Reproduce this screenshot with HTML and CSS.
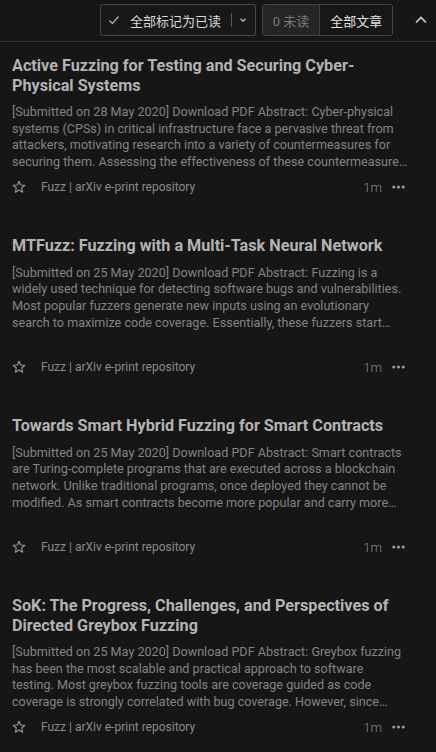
FILE: index.html
```html
<!DOCTYPE html>
<html lang="zh-CN">
<head>
    <meta charset="UTF-8">
    <meta name="viewport" content="width=device-width, initial-scale=1.0">
    <title>Fuzz</title>
    <link rel="stylesheet" href="styles.css">
</head>
<body>
    <header class="toolbar">
        <div class="mark-group">
            <button class="mark-all">
                <svg width="12" height="12" viewBox="0 0 12 12"><path d="M1.5 6.5 L4.5 9.5 L10.5 2.5" fill="none" stroke="#a8a8a8" stroke-width="1.3"/></svg>
                <span>全部标记为已读</span>
            </button>
            <span class="divider"></span>
            <button class="mark-menu">
                <svg width="8" height="8" viewBox="0 0 8 8"><path d="M1.5 2.8 L4 5.2 L6.5 2.8" fill="none" stroke="#b0b0b0" stroke-width="1.4"/></svg>
            </button>
        </div>
        <div class="filter-group">
            <button class="filter unread">0 未读</button>
            <button class="filter all">全部文章</button>
        </div>
        <button class="collapse">
            <svg width="14" height="10" viewBox="0 0 14 10"><path d="M2 7.5 L7 2.5 L12 7.5" fill="none" stroke="#d0d0d0" stroke-width="1.6"/></svg>
        </button>
    </header>

    <main class="article-list">
        <article class="card">
            <div class="card-body">
                <h3 class="card-title">Active Fuzzing for Testing and Securing Cyber-Physical Systems</h3>
                <p class="card-desc">[Submitted on 28 May 2020] Download PDF Abstract: Cyber-physical systems (CPSs) in critical infrastructure face a pervasive threat from attackers, motivating research into a variety of countermeasures for securing them. Assessing the effectiveness of these countermeasures is challenging, however, as realistic benchmarks of attacks are difficult to manually construct.</p>
            </div>
            <div class="card-foot">
                <svg class="star" width="14" height="14" viewBox="0 0 14 14"><path d="M7 1.2 L8.7 5 L12.8 5.3 L9.7 8 L10.6 12.2 L7 10 L3.4 12.2 L4.3 8 L1.2 5.3 L5.3 5 Z" fill="none" stroke="#9a9a9a" stroke-width="1.1" stroke-linejoin="round"/></svg>
                <span class="source">Fuzz | arXiv e-print repository</span>
                <span class="time">1m</span>
                <svg class="more" width="13" height="4" viewBox="0 0 13 4"><circle cx="1.8" cy="2" r="1.6"/><circle cx="6.5" cy="2" r="1.6"/><circle cx="11.2" cy="2" r="1.6"/></svg>
            </div>
        </article>

        <article class="card">
            <div class="card-body">
                <h3 class="card-title">MTFuzz: Fuzzing with a Multi-Task Neural Network</h3>
                <p class="card-desc">[Submitted on 25 May 2020] Download PDF Abstract: Fuzzing is a widely used technique for detecting software bugs and vulnerabilities. Most popular fuzzers generate new inputs using an evolutionary search to maximize code coverage. Essentially, these fuzzers start with a set of seed inputs.</p>
            </div>
            <div class="card-foot">
                <svg class="star" width="14" height="14" viewBox="0 0 14 14"><path d="M7 1.2 L8.7 5 L12.8 5.3 L9.7 8 L10.6 12.2 L7 10 L3.4 12.2 L4.3 8 L1.2 5.3 L5.3 5 Z" fill="none" stroke="#9a9a9a" stroke-width="1.1" stroke-linejoin="round"/></svg>
                <span class="source">Fuzz | arXiv e-print repository</span>
                <span class="time">1m</span>
                <svg class="more" width="13" height="4" viewBox="0 0 13 4"><circle cx="1.8" cy="2" r="1.6"/><circle cx="6.5" cy="2" r="1.6"/><circle cx="11.2" cy="2" r="1.6"/></svg>
            </div>
        </article>

        <article class="card">
            <div class="card-body">
                <h3 class="card-title">Towards Smart Hybrid Fuzzing for Smart Contracts</h3>
                <p class="card-desc">[Submitted on 25 May 2020] Download PDF Abstract: Smart contracts are Turing-complete programs that are executed across a blockchain network. Unlike traditional programs, once deployed they cannot be modified. As smart contracts become more popular and carry more value, they become a target for attackers.</p>
            </div>
            <div class="card-foot">
                <svg class="star" width="14" height="14" viewBox="0 0 14 14"><path d="M7 1.2 L8.7 5 L12.8 5.3 L9.7 8 L10.6 12.2 L7 10 L3.4 12.2 L4.3 8 L1.2 5.3 L5.3 5 Z" fill="none" stroke="#9a9a9a" stroke-width="1.1" stroke-linejoin="round"/></svg>
                <span class="source">Fuzz | arXiv e-print repository</span>
                <span class="time">1m</span>
                <svg class="more" width="13" height="4" viewBox="0 0 13 4"><circle cx="1.8" cy="2" r="1.6"/><circle cx="6.5" cy="2" r="1.6"/><circle cx="11.2" cy="2" r="1.6"/></svg>
            </div>
        </article>

        <article class="card">
            <div class="card-body">
                <h3 class="card-title">SoK: The Progress, Challenges, and Perspectives of Directed Greybox Fuzzing</h3>
                <p class="card-desc">[Submitted on 25 May 2020] Download PDF Abstract: Greybox fuzzing has been the most scalable and practical approach to software testing. Most greybox fuzzing tools are coverage guided as code coverage is strongly correlated with bug coverage. However, since most covered codes may not contain bugs.</p>
            </div>
            <div class="card-foot">
                <svg class="star" width="14" height="14" viewBox="0 0 14 14"><path d="M7 1.2 L8.7 5 L12.8 5.3 L9.7 8 L10.6 12.2 L7 10 L3.4 12.2 L4.3 8 L1.2 5.3 L5.3 5 Z" fill="none" stroke="#9a9a9a" stroke-width="1.1" stroke-linejoin="round"/></svg>
                <span class="source">Fuzz | arXiv e-print repository</span>
                <span class="time">1m</span>
                <svg class="more" width="13" height="4" viewBox="0 0 13 4"><circle cx="1.8" cy="2" r="1.6"/><circle cx="6.5" cy="2" r="1.6"/><circle cx="11.2" cy="2" r="1.6"/></svg>
            </div>
        </article>
    </main>
</body>
</html>
```

FILE: styles.css
```css
body {
    margin: 0;
    background-color: #161616;
    font-family: Roboto, "Noto Sans CJK SC", sans-serif;
    color: #b8b8b8;
    overflow: hidden;
}

button {
    font-family: inherit;
    background: none;
    border: none;
    padding: 0;
    color: inherit;
    cursor: pointer;
}

/* top bar */
.toolbar {
    height: 42px;
    box-sizing: border-box;
    border-bottom: 1px solid #2e2e2e;
    display: flex;
    align-items: flex-start;
    padding: 4px 0 0 100px;
}

.mark-group {
    display: flex;
    align-items: center;
    width: 156px;
    height: 32px;
    box-sizing: border-box;
    border: 1px solid #4a4a4a;
    border-radius: 3px;
    background-color: #181818;
}

.mark-all {
    display: flex;
    align-items: center;
    gap: 10px;
    padding-left: 7px;
    width: 130px;
    height: 100%;
    font-size: 13px;
    color: #d8d8d8;
}

.divider {
    width: 1px;
    height: 14px;
    background-color: #5a5a5a;
}

.mark-menu {
    display: flex;
    align-items: center;
    justify-content: center;
    width: 22px;
    height: 100%;
}

.filter-group {
    display: flex;
    margin-left: 6px;
    height: 32px;
    box-sizing: border-box;
    border: 1px solid #444;
    border-radius: 3px;
    overflow: hidden;
}

.filter {
    font-size: 13px;
    height: 100%;
}

.filter.unread {
    width: 58px;
    background-color: #252525;
    color: #7a7a7a;
    border-right: 1px solid #444;
}

.filter.all {
    width: 72px;
    color: #e2e2e2;
    background-color: #171717;
}

.collapse {
    display: flex;
    align-items: center;
    justify-content: center;
    width: 30px;
    height: 32px;
    margin-left: 13px;
}

/* articles */
.card {
    height: 180px;
    box-sizing: border-box;
    padding: 14px 28px 0 12px;
}

.card-body {
    height: 120px;
    overflow: hidden;
}

.card-title {
    margin: 0 0 9px;
    font-size: 16.2px;
    font-weight: 700;
    line-height: 19.5px;
    color: #b3b3b3;
}

.card-desc {
    margin: 0;
    font-size: 12.6px;
    line-height: 16.7px;
    color: #838383;
    display: -webkit-box;
    -webkit-line-clamp: 4;
    -webkit-box-orient: vertical;
    overflow: hidden;
}

.card-foot {
    display: flex;
    align-items: center;
    height: 20px;
    margin-top: 1px;
    margin-right: -28px;
    font-size: 12px;
    color: #8a8a8a;
}

.source {
    margin-left: 15px;
    flex: 1;
}

.time {
    font-size: 13px;
    font-weight: 300;
    margin-right: 10px;
}

.more {
    fill: #9a9a9a;
    margin-right: 31px;
}
```
